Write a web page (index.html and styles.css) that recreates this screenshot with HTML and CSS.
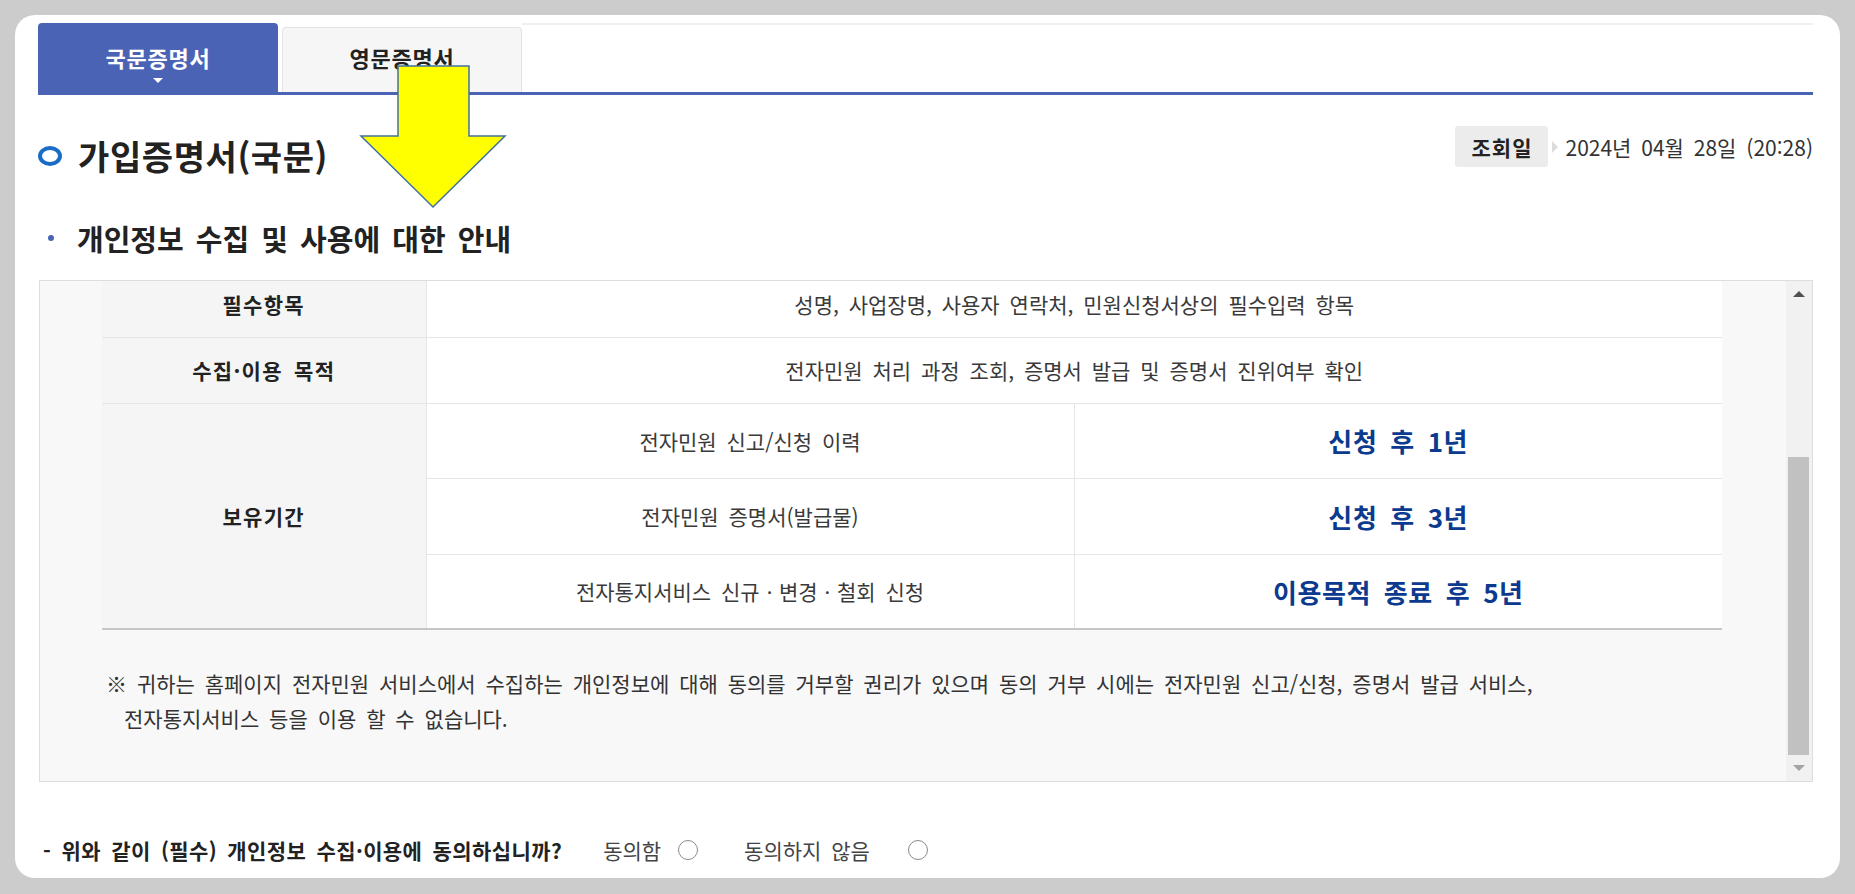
FILE: index.html
```html
<!DOCTYPE html>
<html lang="ko">
<head>
  <meta charset="UTF-8" />
  <meta name="viewport" content="width=device-width, initial-scale=1.0" />
  <title>가입증명서(국문)</title>
  <link rel="stylesheet" href="styles.css">
</head>
<body>
  <div class="card">
    <div class="tabs">
      <div class="tab tab-on">국문증명서<span class="tab-caret"></span></div>
      <div class="tab tab-off">영문증명서</div>
      <div class="tab-rest"></div>
    </div>

    <div class="title-row">
      <h1 class="title"><span class="title-ring"></span>가입증명서(국문)</h1>
      <div class="date">
        <span class="date-label">조회일</span>
        <span class="date-arrow"></span>
        <span class="date-value">2024년 04월 28일 (20:28)</span>
      </div>
    </div>

    <h2 class="subtitle"><span class="subtitle-dot"></span>개인정보 수집 및 사용에 대한 안내</h2>

    <div class="scroll-box">
      <div class="scroll-content">
        <table class="info">
          <colgroup>
            <col class="col-head">
            <col class="col-a">
            <col class="col-b">
          </colgroup>
          <tr class="row-1">
            <th>필수항목</th>
            <td colspan="2">성명, 사업장명, 사용자 연락처, 민원신청서상의 필수입력 항목</td>
          </tr>
          <tr class="row-2">
            <th>수집·이용 목적</th>
            <td colspan="2">전자민원 처리 과정 조회, 증명서 발급 및 증명서 진위여부 확인</td>
          </tr>
          <tr class="row-3">
            <th rowspan="3">보유기간</th>
            <td>전자민원 신고/신청 이력</td>
            <td class="period">신청 후 1년</td>
          </tr>
          <tr class="row-4">
            <td>전자민원 증명서(발급물)</td>
            <td class="period">신청 후 3년</td>
          </tr>
          <tr class="row-5 last">
            <td>전자통지서비스 신규ㆍ변경ㆍ철회 신청</td>
            <td class="period">이용목적 종료 후 5년</td>
          </tr>
        </table>
        <p class="notice">※ 귀하는 홈페이지 전자민원 서비스에서 수집하는 개인정보에 대해 동의를 거부할 권리가 있으며 동의 거부 시에는 전자민원 신고/신청, 증명서 발급 서비스,<br>전자통지서비스 등을 이용 할 수 없습니다.</p>
      </div>
      <div class="scrollbar">
        <div class="sb-btn"><span class="sb-up"></span></div>
        <div class="sb-track"><div class="sb-thumb"></div></div>
        <div class="sb-btn"><span class="sb-down"></span></div>
      </div>
    </div>

    <div class="agree">
      <span class="agree-q">- 위와 같이 (필수) 개인정보 수집·이용에 동의하십니까?</span>
      <span class="agree-opt opt-yes">동의함</span>
      <span class="radio radio-yes"></span>
      <span class="agree-opt opt-no">동의하지 않음</span>
      <span class="radio radio-no"></span>
    </div>
  </div>

  <svg class="arrow" width="160" height="155" viewBox="0 0 160 155">
    <polygon points="43,6 114,6 114,76 150,76 78,147 6,76 43,76" fill="#ffff00" stroke="#41719c" stroke-width="1.5" />
  </svg>
</body>
</html>
```

FILE: styles.css
```css
* {
  box-sizing: border-box;
  margin: 0;
  padding: 0;
  font-family: "Noto Sans CJK KR", "Noto Sans", sans-serif;
}
html, body {
  height: 894px;
}
body {
  background-color: #cccccc;
  overflow: hidden;
}
.card {
  margin: 15px 15px 0 15px;
  background: #fff;
  border-radius: 20px;
  padding: 8px 27px 14px 23px;
  word-spacing: 4px;
}

/* tabs */
.tabs {
  display: flex;
  align-items: flex-end;
  height: 72px;
  border-bottom: 3px solid #4b63b5;
}
.tab {
  width: 240px;
  display: flex;
  flex-direction: column;
  align-items: center;
  font-size: 22px;
  line-height: 22px;
  letter-spacing: 0.8px;
  font-weight: bold;
}
.tab-on {
  height: 69px;
  padding-top: 23px;
  background: #4b63b5;
  color: #fff;
  border-radius: 4px 4px 0 0;
}
.tab-caret {
  margin-top: 10px;
  width: 0;
  height: 0;
  border-top: 5px solid #fff;
  border-left: 5px solid transparent;
  border-right: 5px solid transparent;
}
.tab-off {
  height: 65px;
  margin-left: 4px;
  padding-top: 18px;
  background: #f6f6f6;
  color: #222;
  border: 1px solid #e3e3e3;
  border-bottom: none;
  border-radius: 4px 4px 0 0;
}
.tab-rest {
  flex: 1;
  align-self: stretch;
  border-top: 2px solid #eef0f6;
}

/* title */
.title-row {
  margin-top: 31px;
  display: flex;
  justify-content: space-between;
  align-items: flex-start;
}
.title {
  margin-top: 10px;
  display: flex;
  align-items: center;
  font-size: 34px;
  line-height: 40px;
  letter-spacing: 0.6px;
  font-weight: bold;
  color: #222;
}
.title-ring {
  width: 24px;
  height: 20px;
  border: 4.5px solid #1a6cc6;
  border-radius: 50%;
  margin-right: 16px;
}
.date {
  display: flex;
  align-items: center;
  height: 41px;
}
.date-label {
  width: 93px;
  height: 41px;
  background: #ececec;
  border-radius: 3px;
  display: flex;
  align-items: center;
  justify-content: center;
  font-size: 21px;
  font-weight: bold;
  letter-spacing: 1px;
  color: #222;
}
.date-arrow {
  margin-left: 4px;
  width: 0;
  height: 0;
  border-left: 6px solid #dcdcdc;
  border-top: 6px solid transparent;
  border-bottom: 6px solid transparent;
}
.date-value {
  margin-left: 7px;
  font-size: 21px;
  color: #333;
}

.subtitle {
  margin-top: 46px;
  display: flex;
  align-items: center;
  font-size: 29px;
  line-height: 32px;
  font-weight: bold;
  color: #222;
}
.subtitle-dot {
  width: 6px;
  height: 6px;
  border-radius: 50%;
  background: #4b63b5;
  margin-left: 10px;
  margin-right: 23px;
}

/* scroll box */
.scroll-box {
  margin-top: 26px;
  margin-left: 1px;
  height: 502px;
  border: 1px solid #dddddd;
  background: #f8f8f8;
  display: flex;
}
.scroll-content {
  flex: 1;
  overflow: hidden;
  padding: 0 64px 0 62px;
}
.info {
  width: 100%;
  margin-top: -10px;
  border-collapse: collapse;
  table-layout: fixed;
  font-size: 21px;
}
.col-head { width: 324px; }
.col-a { width: 648px; }
.col-b { width: 648px; }
.info th,
.info td {
  text-align: center;
  border-bottom: 1px solid #e6e6e6;
  padding: 0;
}
.info th {
  background: #f5f5f5;
  font-weight: bold;
  letter-spacing: 1.3px;
  color: #222;
  border-right: 1px solid #e6e6e6;
}
.info td {
  background: #fff;
  color: #3a3a3a;
}
.info td + td {
  border-left: 1px solid #e6e6e6;
}
.row-1 th, .row-1 td { height: 66px; }
.row-2 th, .row-2 td { height: 66px; }
.row-3 td { height: 75px; }
.row-4 td { height: 76px; }
.row-5 td { height: 75px; }
.info .last td,
.info .row-3 th {
  border-bottom: 2px solid #c6c6c6;
}
.info .period {
  font-size: 26px;
  font-weight: bold;
  letter-spacing: 0.6px;
  word-spacing: 5px;
  color: #0b3a8e;
}
.notice {
  margin: 36px 0 0 2px;
  padding-left: 20px;
  text-indent: -18px;
  font-size: 21px;
  line-height: 35px;
  color: #333;
}

.scrollbar {
  width: 26px;
  background: #f1f1f1;
  display: flex;
  flex-direction: column;
}
.sb-btn {
  height: 26px;
  display: flex;
  align-items: center;
  justify-content: center;
}
.sb-up {
  width: 0;
  height: 0;
  border-bottom: 6px solid #505050;
  border-left: 6px solid transparent;
  border-right: 6px solid transparent;
}
.sb-down {
  width: 0;
  height: 0;
  border-top: 6px solid #a3a3a3;
  border-left: 6px solid transparent;
  border-right: 6px solid transparent;
}
.sb-track {
  flex: 1;
  display: flex;
  flex-direction: column;
  justify-content: flex-end;
}
.sb-thumb {
  height: 298px;
  margin: 0 3px 0 2px;
  background: #c1c1c1;
}

/* agree */
.agree {
  margin-top: 54px;
  padding-left: 5px;
  display: flex;
  align-items: center;
  font-size: 21px;
  line-height: 28px;
}
.agree-q {
  font-weight: bold;
  letter-spacing: 0.4px;
  color: #222;
}
.agree-opt {
  color: #444;
}
.opt-yes { margin-left: 41px; }
.opt-no { margin-left: 46px; }
.radio {
  width: 20px;
  height: 20px;
  border: 1.5px solid #8a8a8a;
  border-radius: 50%;
  background: #fff;
}
.radio-yes { margin-left: 17px; }
.radio-no { margin-left: 38px; }

/* annotation arrow over the page */
.arrow {
  position: absolute;
  left: 355px;
  top: 60px;
}
```
